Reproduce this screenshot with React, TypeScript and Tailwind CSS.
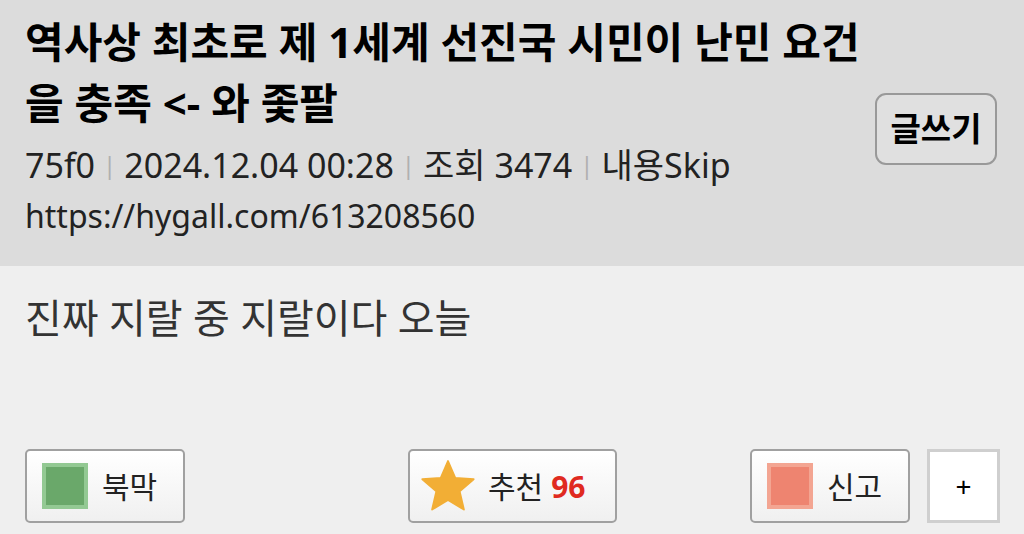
import React from "react";

function Star() {
  return (
    <svg width="56" height="54" viewBox="0 0 24 23">
      <path
        d="M12 0.8 L15.1 8 L23 8.6 L17 13.8 L18.8 21.6 L12 17.5 L5.2 21.6 L7 13.8 L1 8.6 L8.9 8 Z"
        fill="#f2ae35"
        stroke="#f2ae35"
        strokeWidth="0.8"
        strokeLinejoin="round"
      />
    </svg>
  );
}

export default function App() {
  const font = { fontFamily: '"Noto Sans", "Noto Sans CJK KR", sans-serif' };
  return (
    <div className="w-[1024px] h-[534px] bg-[#efefef] overflow-hidden" style={font}>
      <div className="bg-[#dcdcdc] h-[266px] flex items-start pl-[25px] pr-[27px]">
        <div className="flex-1 pt-[11px] pr-[8px]">
          <h1 className="text-[42px] leading-[61px] font-bold text-black">
            역사상 최초로 제 1세계 선진국 시민이 난민 요건을 충족 &lt;- 와 좇팔
          </h1>
          <div className="mt-[7px] text-[34px] leading-[50px] text-[#222] flex items-center">
            <span>75f0</span>
            <span className="mx-[8px] text-[#b0b0b0] text-[24px]">|</span>
            <span>2024.12.04 00:28</span>
            <span className="mx-[8px] text-[#b0b0b0] text-[24px]">|</span>
            <span>조회 3474</span>
            <span className="mx-[8px] text-[#b0b0b0] text-[24px]">|</span>
            <span>내용Skip</span>
          </div>
          <div className="text-[32px] leading-[52px] text-[#222]">https://hygall.com/613208560</div>
        </div>
        <button className="mt-[93px] w-[122px] h-[72px] rounded-[11px] border-2 border-[#999] bg-[#e0e0e0] text-[33px] font-bold text-black flex items-center justify-center">
          글쓰기
        </button>
      </div>
      <div className="px-[25px] pt-[22px] text-[40px] leading-[60px] text-[#333]">진짜 지랄 중 지랄이다 오늘</div>
      <div className="flex items-center pl-[25px] pr-[24px] mt-[101px]">
        <div className="flex-1 flex justify-start">
          <button className="w-[160px] h-[74px] rounded-[5px] border-2 border-[#a0a0a0] bg-gradient-to-b from-white to-[#f0f0f0] flex items-center pl-[15px] gap-[14px]">
            <span className="w-[46px] h-[46px] bg-[#6aa86a] border-[4px] border-[#93c993] block"></span>
            <span className="text-[30px] text-[#222]">북막</span>
          </button>
        </div>
        <button className="w-[209px] h-[74px] rounded-[5px] border-2 border-[#a0a0a0] bg-gradient-to-b from-white to-[#f0f0f0] flex items-center pl-[10px] gap-[12px]">
          <Star />
          <span className="text-[30px] text-[#222]">추천</span>
          <span className="text-[30px] font-bold text-[#e02a20] -ml-[4px]">96</span>
        </button>
        <div className="flex-1 flex justify-end items-center gap-[17px]">
          <button className="w-[160px] h-[74px] rounded-[5px] border-2 border-[#a0a0a0] bg-gradient-to-b from-white to-[#f0f0f0] flex items-center pl-[15px] gap-[14px]">
            <span className="w-[46px] h-[46px] bg-[#ee8470] border-[4px] border-[#f3a592] block"></span>
            <span className="text-[30px] text-[#222]">신고</span>
          </button>
          <button className="w-[73px] h-[74px] border-[3px] border-[#cfcfcf] bg-white text-[28px] text-black flex items-center justify-center">
            +
          </button>
        </div>
      </div>
    </div>
  );
}
